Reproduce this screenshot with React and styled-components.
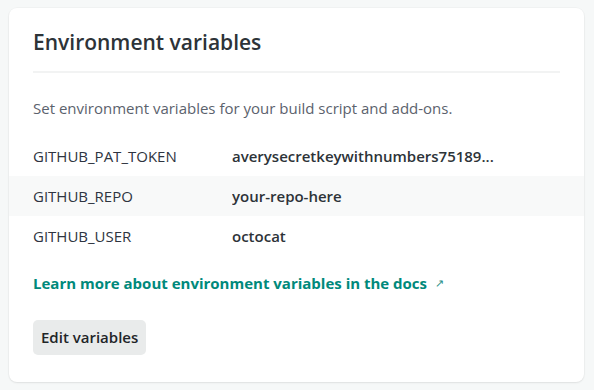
import React from 'react';
import styled, { createGlobalStyle } from 'styled-components';

const GlobalStyle = createGlobalStyle`
  html, body {
    margin: 0;
    background: #f6f8f8;
  }
  body {
    font-family: "Open Sans", "Noto Sans", sans-serif;
    color: #2e3440;
  }
`;

const Page = styled.div`
  padding: 8px 10px 8px 9px;
`;

const Card = styled.section`
  background: #fff;
  border-radius: 8px;
  box-shadow: 0 1px 2px rgba(0, 0, 0, 0.08), 0 0 0 1px rgba(0, 0, 0, 0.02);
  padding: 22px 0 27px;
`;

const Header = styled.div`
  margin: 0 24px;
  padding-bottom: 17px;
  border-bottom: 2px solid #f2f3f3;
`;

const Title = styled.h2`
  margin: 0;
  font-size: 21px;
  font-weight: 600;
  line-height: 24px;
  color: #2d3338;
`;

const Description = styled.p`
  margin: 23px 24px 16px;
  font-size: 15px;
  line-height: 24px;
  color: #5b626d;
`;

const Row = styled.div`
  display: grid;
  grid-template-columns: 199px 1fr;
  align-items: center;
  height: 40px;
  padding: 0 24px;
  background: ${p => (p.striped ? '#f8f9f9' : 'transparent')};
  font-size: 15px;
`;

const Key = styled.span`
  color: #2e3440;
`;

const Value = styled.span`
  font-weight: 600;
  color: #2d3338;
  white-space: nowrap;
  overflow: hidden;
  text-overflow: ellipsis;
`;

const Link = styled.a`
  display: inline-flex;
  align-items: center;
  gap: 8px;
  margin: 17px 24px 0;
  font-size: 15px;
  line-height: 20px;
  font-weight: 700;
  color: #00897b;
  text-decoration: none;
`;

const Arrow = styled.span`
  font-size: 11px;
  font-weight: 400;
  color: #2a8f86;
`;

const Footer = styled.div`
  margin: 26px 24px 0;
`;

const Button = styled.button`
  font-family: inherit;
  font-size: 15px;
  font-weight: 600;
  color: #1f2528;
  background: #e9ebeb;
  border: 0;
  border-radius: 5px;
  padding: 7px 8px;
  line-height: 21px;
  cursor: pointer;
`;

const variables = [
  { key: 'GITHUB_PAT_TOKEN', value: 'averysecretkeywithnumbers75189...' },
  { key: 'GITHUB_REPO', value: 'your-repo-here' },
  { key: 'GITHUB_USER', value: 'octocat' },
];

export default function App() {
  return (
    <Page>
      <GlobalStyle />
      <Card>
        <Header>
          <Title>Environment variables</Title>
        </Header>
        <Description>Set environment variables for your build script and add-ons.</Description>
        {variables.map((v, i) => (
          <Row key={v.key} striped={i % 2 === 1}>
            <Key>{v.key}</Key>
            <Value>{v.value}</Value>
          </Row>
        ))}
        <Link href="#">
          Learn more about environment variables in the docs
          <Arrow>↗</Arrow>
        </Link>
        <Footer>
          <Button>Edit variables</Button>
        </Footer>
      </Card>
    </Page>
  );
}
